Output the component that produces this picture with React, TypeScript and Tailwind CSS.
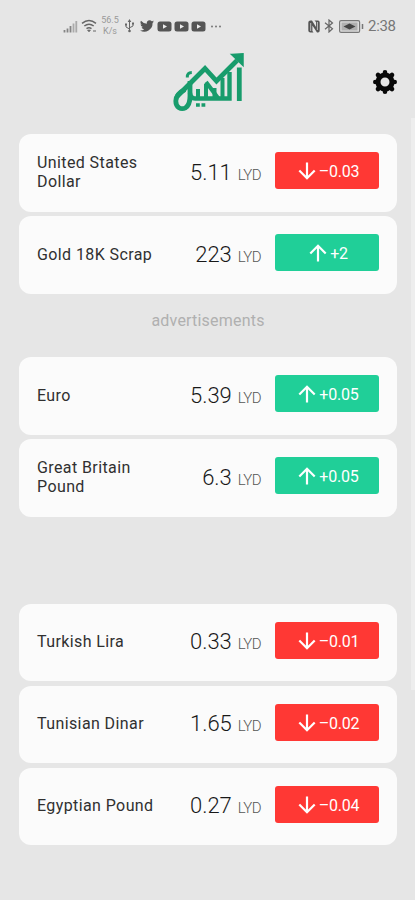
import clsx from "clsx";

type Rate = {
  name: string;
  price: string;
  change: string;
  up?: boolean;
};

const metals: Rate[] = [
  { name: "United States Dollar", price: "5.11", change: "–0.03" },
  { name: "Gold 18K Scrap", price: "223", change: "+2", up: true },
];

const majors: Rate[] = [
  { name: "Euro", price: "5.39", change: "+0.05", up: true },
  { name: "Great Britain Pound", price: "6.3", change: "+0.05", up: true },
];

const regional: Rate[] = [
  { name: "Turkish Lira", price: "0.33", change: "–0.01" },
  { name: "Tunisian Dinar", price: "1.65", change: "–0.02" },
  { name: "Egyptian Pound", price: "0.27", change: "–0.04" },
];

function Video() {
  return (
    <svg width="15" height="11" viewBox="0 0 15 11">
      <rect x=".5" y=".5" width="14" height="10" rx="2.5" fill="#555" />
      <path d="M6 3.2v4.6l4-2.3z" fill="#eee" />
    </svg>
  );
}

function StatusBar() {
  return (
    <div className="flex h-[52px] items-center pl-[63px] pr-[19px] text-[#626262]">
      <svg width="15" height="13" viewBox="0 0 15 13">
        <path d="M1.5 10v2.5M4.5 8.5v4M7.5 6v6.5" stroke="#858585" strokeWidth="1.8" />
        <path d="M10.5 3.5v9M13.3 1v11.5" stroke="#aaa" strokeWidth="1.8" />
      </svg>
      <svg className="ml-[3px]" width="17" height="14" viewBox="0 0 17 14" fill="none" stroke="#666" strokeWidth="1.5">
        <path d="M1 4.3Q8 -1.3 15 4.3M3.3 7Q8 3.3 12.7 7M5.5 9.6Q8 7.7 10.5 9.6" />
        <path d="M6.7 11.2h2.6L8 12.7zM12 12h3" fill="#666" strokeWidth="1" />
      </svg>
      <div className="ml-[2px] w-[20px] text-center text-[9px] leading-[11px] text-[#999]">
        <div>56.5</div>
        <div>K/s</div>
      </div>
      <svg className="ml-[4px]" width="11" height="14" viewBox="0 0 11 14" fill="none" stroke="#666">
        <path d="M5.5 2v10M5.5 10 2 8V5M5.5 8.8 9 7V4.5" />
        <path d="M5.5 0 7.3 3H3.7zM1 4.5h2v2H1zM8 3.5h2v2H8z" fill="#666" stroke="none" />
        <circle cx="5.5" cy="12" r="1.3" fill="#666" stroke="none" />
      </svg>
      <svg className="ml-[5px]" width="14" height="12" viewBox="0 0 24 20" fill="#555">
        <path d="M24 2.4a10 10 0 0 1-2.8.8A5 5 0 0 0 23.3.5a10 10 0 0 1-3.1 1.2 4.9 4.9 0 0 0-8.4 4.5A14 14 0 0 1 1.7 1a4.9 4.9 0 0 0 1.5 6.6A5 5 0 0 1 1 7a4.9 4.9 0 0 0 4 4.9 5 5 0 0 1-2.3.1 4.9 4.9 0 0 0 4.6 3.4A9.9 9.9 0 0 1 0 17.5 14 14 0 0 0 21.5 5z" />
      </svg>
      <div className="ml-[3px] flex gap-[2px]">
        <Video />
        <Video />
        <Video />
      </div>
      <svg className="ml-[4px]" width="12" height="3" fill="#777">
        <circle cx="2" cy="1.5" r="1" />
        <circle cx="6" cy="1.5" r="1" />
        <circle cx="10" cy="1.5" r="1" />
      </svg>
      <div className="ml-auto flex items-center">
        <svg width="12" height="13" viewBox="0 0 12 13">
          <path d="M2.5.5H4L8 7V2L6.5.5H10Q11.7.5 11.7 2.5v8q0 2-1.7 2H9L4.4 5.5V11L5.5 12.5h-3Q.3 12.5.3 10.5v-8Q.3.5 2.5.5z" fill="#555" />
          <path d="M2.7 3v8M9.4 2v8" stroke="#ddd" strokeWidth=".8" />
        </svg>
        <svg className="ml-[4px]" width="10" height="14" viewBox="0 0 10 14" fill="none" stroke="#666" strokeWidth="1.2">
          <path d="m1 3.8 7.5 6L5 13V1l3.5 3L1 10.2" />
        </svg>
        <svg className="ml-[5px]" width="25" height="13" viewBox="0 0 25 13">
          <rect x=".6" y=".6" width="20" height="11.8" rx="1.5" fill="#ddd" stroke="#777" strokeWidth="1.2" />
          <path d="M2.5 2.5h16v8h-16z" fill="#b0b0b0" />
          <path d="M4.5 6.5 10.5 3.5l6 3-6 3z" fill="#444" />
          <path d="M23.5 4v5" stroke="#777" strokeWidth="1.5" />
        </svg>
        <span className="ml-[4px] w-[28px] whitespace-nowrap text-[15px] leading-none tracking-[-0.3px] text-[#777]">
          2:38
        </span>
      </div>
    </div>
  );
}

function Logo() {
  return (
    <svg width="74" height="62" viewBox="0 0 74 62" fill="none" stroke="#189c6c">
      <path d="M5 44.5 33 16.5 44.5 29 65 8.5" strokeWidth="4.8" />
      <path d="M59.5 2.5 71 1.8V13.5z" fill="#189c6c" strokeWidth="1.5" />
      <path d="M13 37.5C6 41 3.8 44.5 3.8 49C3.8 55.5 9 58 13.5 55.8Q18 53 18 44V29" strokeWidth="4.8" />
      <path d="M18 41Q18.5 46.5 23 46.5H57.5V20" strokeWidth="4.4" />
      <path d="M26 47V37M34 47V32M42.5 47V36M50.5 47V26" strokeWidth="4" />
      <path d="M34 30 46 46" strokeWidth="4" />
      <path d="M67.3 49V15.5" strokeWidth="4.8" />
      <path d="M15.3 25.5q-.3-4.8 4.5-5" strokeWidth="3" />
      <path d="M24 53h3.8M29.5 53h3.8" strokeWidth="3.6" />
    </svg>
  );
}

function Gear() {
  return (
    <svg width="24" height="24" viewBox="0 0 24 24" fill="none" stroke="#080808">
      <circle cx="12" cy="12" r="7" strokeWidth="5" />
      <path
        d="M12 2.3v2M12 19.7v2M2.3 12h2M19.7 12h2M5 5l1.5 1.5M17.5 17.5 19 19M19 5l-1.5 1.5M6.5 17.5 5 19"
        strokeWidth="4.6"
        strokeLinecap="round"
      />
    </svg>
  );
}

function Arrow({ up }: { up?: boolean }) {
  return (
    <svg
      width="18"
      height="18"
      viewBox="0 0 18 18"
      fill="none"
      stroke="currentColor"
      strokeWidth="2.2"
      className={clsx(up && "rotate-180", "-mt-[2px] shrink-0")}
    >
      <path d="M9 .5V16M1.3 8.5 9 16.2l7.7-7.7" />
    </svg>
  );
}

function RateCard({ rate }: { rate: Rate }) {
  return (
    <div className="flex h-[77.5px] items-center rounded-[12px] bg-[#fbfbfb] pl-[18px] pr-[18px]">
      <div className="w-[125px] pb-[1px] text-[16px] leading-[19px] tracking-[0.4px] text-[#303030]">{rate.name}</div>
      <div className="flex flex-1 items-baseline justify-end pr-[14px]">
        <span className="text-[22px] font-light leading-none text-[#181818]">{rate.price}</span>
        <span className="ml-[6px] text-[15px] font-light leading-none tracking-[-0.6px] text-[#555]">LYD</span>
      </div>
      <div
        className={clsx(
          "mb-[4px] flex h-[37px] w-[104px] items-center justify-center gap-[3px] rounded-[3px] pl-[3px] pt-[3px] text-[16px] tracking-[-0.2px] text-white",
          rate.up ? "bg-[#20cf98]" : "bg-[#ff3834]"
        )}
      >
        <Arrow up={rate.up} />
        <span>{rate.change}</span>
      </div>
    </div>
  );
}

function RateGroup({ rates }: { rates: Rate[] }) {
  return (
    <div className="flex flex-col gap-[4.5px]">
      {rates.map((rate) => (
        <RateCard key={rate.name} rate={rate} />
      ))}
    </div>
  );
}

export default function App() {
  return (
    <div className="relative h-[900px] w-[415px] overflow-hidden bg-[#e6e6e6] font-['Roboto','Noto_Sans',sans-serif]">
      <StatusBar />
      <header className="flex h-[82px] items-start justify-between pl-[172px] pr-[18px]">
        <Logo />
        <div className="pt-[18px]">
          <Gear />
        </div>
      </header>
      <main className="pl-[19px] pr-[18px]">
        <RateGroup rates={metals} />
        <p className="flex h-[63.5px] items-center justify-center pb-[9px] text-[16px] tracking-[0.2px] text-[#b0b0b0]">
          advertisements
        </p>
        <RateGroup rates={majors} />
        <div className="h-[87px]" />
        <RateGroup rates={regional} />
      </main>
      {/* scroll thumb */}
      <div className="absolute right-0 top-[118px] h-[572px] w-[4px] bg-[#eeeeee]" />
    </div>
  );
}
